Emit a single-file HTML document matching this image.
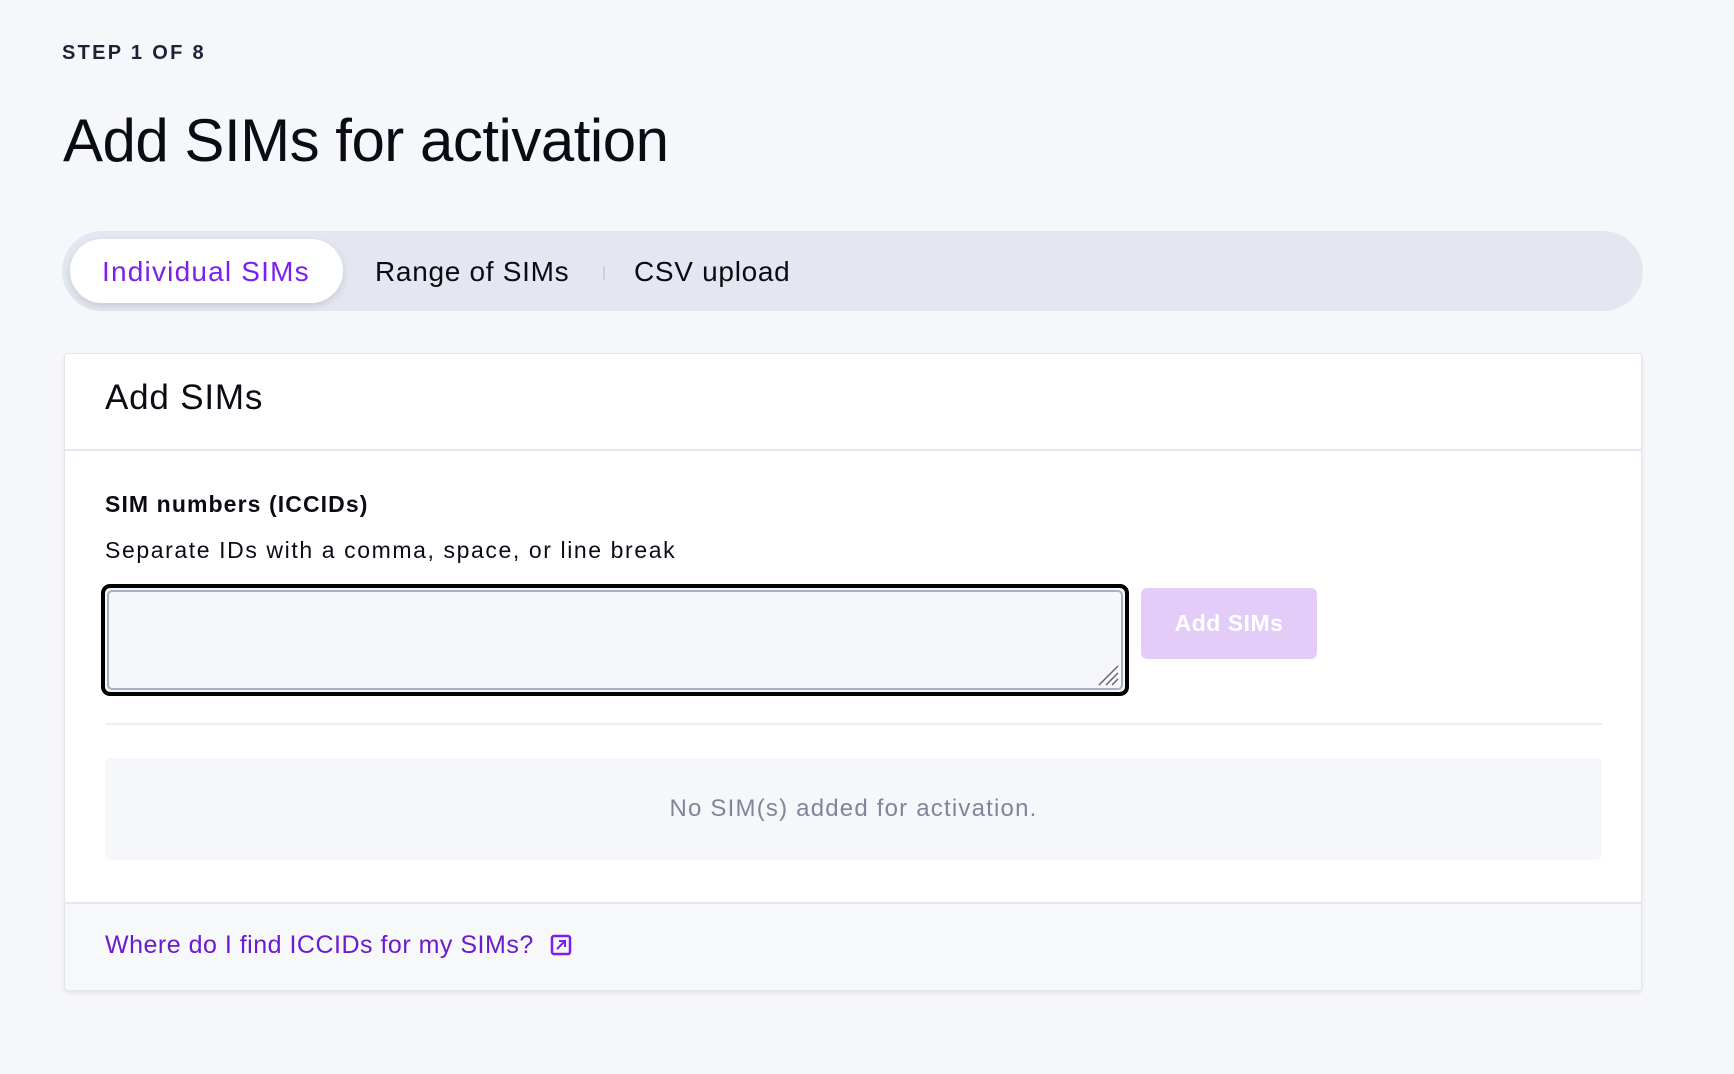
<!DOCTYPE html>
<html><head><meta charset="utf-8"><style>
*{box-sizing:border-box;margin:0;padding:0}
body{width:1734px;height:1074px;background:#f6f7fb;font-family:"Liberation Sans",sans-serif;color:#0b0b14;position:relative;overflow:hidden}
.abs{position:absolute;white-space:nowrap}
</style></head><body>
<div class="abs" style="left:62px;top:42px;font-size:20px;font-weight:bold;letter-spacing:2.3px;color:#1d2236">STEP 1 OF 8</div>
<div class="abs" style="left:63px;top:105px;font-size:60px;line-height:72px;letter-spacing:-0.5px">Add SIMs for activation</div>

<div class="abs" style="left:62px;top:231px;width:1581px;height:80px;border-radius:40px;background:#e4e7ef"></div>
<div class="abs" style="left:70px;top:239px;width:273px;height:64px;border-radius:32px;background:#fff;box-shadow:0 3px 8px rgba(0,0,0,0.12)"></div>
<div class="abs" style="left:102px;top:256px;font-size:28px;letter-spacing:1.2px;color:#7b1ff0">Individual SIMs</div>
<div class="abs" style="left:375px;top:256px;font-size:28px;letter-spacing:0.7px">Range of SIMs</div>
<div class="abs" style="left:603px;top:266px;width:2px;height:14px;background:#cdd1dc"></div>
<div class="abs" style="left:634px;top:256px;font-size:28px;letter-spacing:0.7px">CSV upload</div>

<div class="abs" style="left:64px;top:353px;width:1578px;height:638px;background:#fff;border:1px solid #e3e6ee;border-radius:4px;box-shadow:0 2px 4px rgba(0,0,0,0.08);overflow:hidden">
 <div style="position:absolute;left:0;top:95px;width:100%;height:2px;background:#e4e7ee"></div>
 <div class="abs" style="left:40px;top:24px;font-size:35px;letter-spacing:0.8px">Add SIMs</div>
 <div class="abs" style="left:40px;top:137px;font-size:23px;font-weight:bold;letter-spacing:1.1px">SIM numbers (ICCIDs)</div>
 <div class="abs" style="left:40px;top:183px;font-size:23px;letter-spacing:1.6px">Separate IDs with a comma, space, or line break</div>
 <div class="abs" style="left:36px;top:230px;width:1028px;height:112px;border:4px solid #000;border-radius:9px;background:#f6f7fb">
  <div style="position:absolute;inset:2px;border:2px solid #a9b0be;border-radius:5px"></div>
  <svg style="position:absolute;right:6px;bottom:6px" width="24" height="24"><path d="M23 4L4 23M23 11L11 23M23 17L17 23" stroke="#666" stroke-width="1.5"/></svg>
 </div>
 <div class="abs" style="left:1076px;top:234px;width:176px;height:71px;border-radius:6px;background:#e3cdf8;color:#fff;font-size:23px;font-weight:bold;text-align:center;line-height:71px;letter-spacing:0.5px">Add SIMs</div>
 <div style="position:absolute;left:40px;top:369px;width:1497px;height:2px;background:#eceef3"></div>
 <div class="abs" style="left:40px;top:404px;width:1497px;height:102px;border-radius:6px;background:#f6f7fa;text-align:center;line-height:102px;font-size:24px;letter-spacing:1.2px;color:#80869a">No SIM(s) added for activation.</div>
 <div style="position:absolute;left:0;top:548px;width:100%;height:90px;background:#f7f8fa;border-top:2px solid #e4e7ee"></div>
 <div class="abs" style="left:40px;top:577px;font-size:25px;letter-spacing:0.5px;color:#6a1bd1">Where do I find ICCIDs for my SIMs?</div>
 <svg class="abs" style="left:485px;top:580px" width="22" height="22" viewBox="0 0 22 22"><rect x="2" y="2" width="18" height="18" rx="2" fill="none" stroke="#7b1ff0" stroke-width="2.5"/><path d="M7 15L15 7M9 7h6v6" fill="none" stroke="#7b1ff0" stroke-width="2"/></svg>
</div>
</body></html>
